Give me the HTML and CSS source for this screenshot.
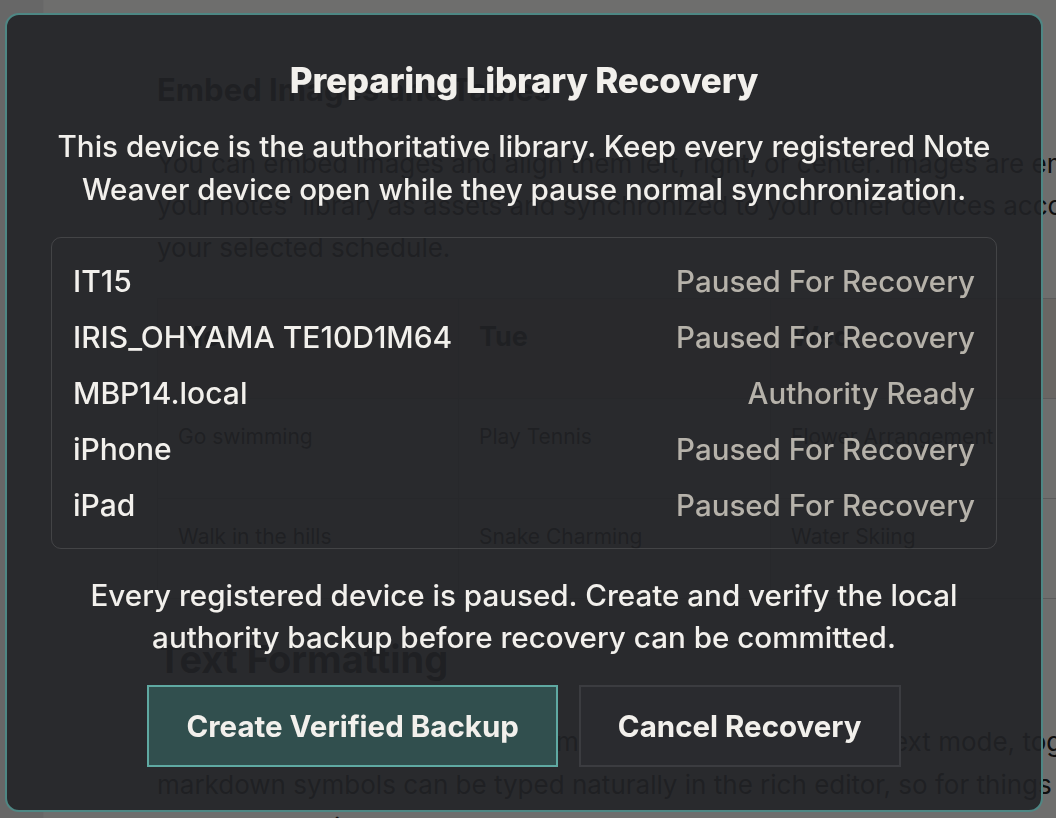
FILE: index.html
```html
<!DOCTYPE html>
<html lang="en">
<head>
<meta charset="utf-8">
<title>Preparing Library Recovery</title>
<link rel="stylesheet" href="styles.css">
</head>
<body>
<div class="app">
  <aside class="sidebar"></aside>
  <main class="doc">
    <h1 class="doc-h">Embed Images and Tables</h1>
    <p class="doc-p">You can embed images and align them left, right, or center. Images are embedded in<br>your notes' library as assets and synchronized to your other devices according to<br>your selected schedule.</p>
    <table class="doc-table">
      <tr class="head"><th>Mon</th><th>Tue</th><th>Wed</th></tr>
      <tr><td>Go swimming</td><td>Play Tennis</td><td>Flower Arrangement</td></tr>
      <tr><td>Walk in the hills</td><td>Snake Charming</td><td>Water Skiing</td></tr>
    </table>
    <h1 class="doc-h doc-h2">Text Formatting</h1>
    <p class="doc-p doc-p2">You can format text using either markdown mode or in rich text mode, toggling between them at any time. Many<br>markdown symbols can be typed naturally in the rich editor, so for things like headings<br>such as bold, lists and quotes.</p>
  </main>
</div>
<div class="overlay"></div>
<section class="modal">
  <h2 class="title">Preparing Library Recovery</h2>
  <p class="lead">This device is the authoritative library. Keep every registered Note<br>Weaver device open while they pause normal synchronization.</p>
  <ul class="devices">
    <li><span class="name">IT15</span><span class="status">Paused For Recovery</span></li>
    <li><span class="name">IRIS_OHYAMA TE10D1M64</span><span class="status">Paused For Recovery</span></li>
    <li><span class="name">MBP14.local</span><span class="status">Authority Ready</span></li>
    <li><span class="name">iPhone</span><span class="status">Paused For Recovery</span></li>
    <li><span class="name">iPad</span><span class="status">Paused For Recovery</span></li>
  </ul>
  <p class="lead note">Every registered device is paused. Create and verify the local<br>authority backup before recovery can be committed.</p>
  <div class="actions">
    <button class="btn primary">Create Verified Backup</button>
    <button class="btn">Cancel Recovery</button>
  </div>
</section>
</body>
</html>
```

FILE: styles.css
```css
* { box-sizing: border-box; }
html, body { margin: 0; padding: 0; }
body {
  width: 1056px;
  height: 818px;
  overflow: hidden;
  font-family: Inter, "Noto Sans", sans-serif;
  background: #fbfaf8;
}
.app {
  display: flex;
  height: 818px;
  overflow: hidden;
}
.sidebar {
  flex: 0 0 44px;
  background: #ebebeb;
  border-right: 1px solid #f4f4f4;
}
.doc {
  flex: 1;
  padding: 70px 0 0 113px;
  white-space: nowrap;
  overflow: hidden;
  color: #222;
}
.doc-h {
  margin: 0;
  font-size: 31px;
  line-height: 40px;
  font-weight: 700;
}
.doc-p {
  margin: 33px 0 0;
  font-size: 26px;
  line-height: 42px;
}
.doc-table {
  margin-top: 29px;
  border-collapse: collapse;
  width: 1100px;
}
.doc-table th, .doc-table td {
  border: 1px solid #d2d2d2;
  text-align: left;
  vertical-align: top;
  padding: 17px 20px 0;
  height: 100px;
  font-size: 21px;
  line-height: 42px;
  font-weight: 400;
}
.doc-table th { font-size: 27px; font-weight: 700; }
.doc-table tr.head { background: #efe8e2; }
.doc-table th:first-child, .doc-table td:first-child { width: 301px; }
.doc-table th:nth-child(2), .doc-table td:nth-child(2) { width: 312px; }
.doc-h2 { margin-top: 38px; font-size: 38px; line-height: 44px; }
.doc-p2 { margin-top: 39px; line-height: 43px; }

.overlay {
  position: fixed;
  inset: 0;
  background: rgba(0, 0, 0, 0.56);
}
.modal {
  position: fixed;
  left: 5px;
  top: 13px;
  width: 1038px;
  height: 799px;
  border: 2px solid #4e8784;
  border-radius: 14px;
  background: rgba(33, 34, 38, 0.9);
  padding: 45px 40px 0;
  display: flex;
  flex-direction: column;
  align-items: center;
  color: #f2f0ec;
}
.title {
  margin: 0;
  font-size: 35px;
  line-height: 40px;
  font-weight: 800;
  letter-spacing: -0.2px;
}
.lead {
  margin: 25px 0 0;
  font-size: 29.6px;
  line-height: 43px;
  font-weight: 500;
  text-align: center;
  white-space: nowrap;
}
.devices {
  list-style: none;
  margin: 26px 0 0;
  padding: 15px 21px;
  width: 946px;
  border: 1px solid rgba(255, 255, 255, 0.12);
  border-radius: 10px;
}
.devices li {
  display: flex;
  justify-content: space-between;
  align-items: center;
  height: 56px;
  font-weight: 500;
}
.name { color: #f2f0ec; font-size: 30px; }
.status { color: #b6b2aa; font-size: 29.5px; }
.note {
  margin-top: 25px;
  line-height: 42px;
}
.actions {
  display: flex;
  gap: 21px;
  margin-top: 27px;
}
.btn {
  height: 82px;
  padding: 0 37px;
  font-family: Inter, "Noto Sans", sans-serif;
  font-size: 29.5px;
  font-weight: 700;
  color: #f2f0ec;
  background: #2a2b2f;
  border: 2px solid #3b3c40;
  border-radius: 0;
}
.btn.primary {
  background: #314f4e;
  border-color: #5fa9a2;
}
```
